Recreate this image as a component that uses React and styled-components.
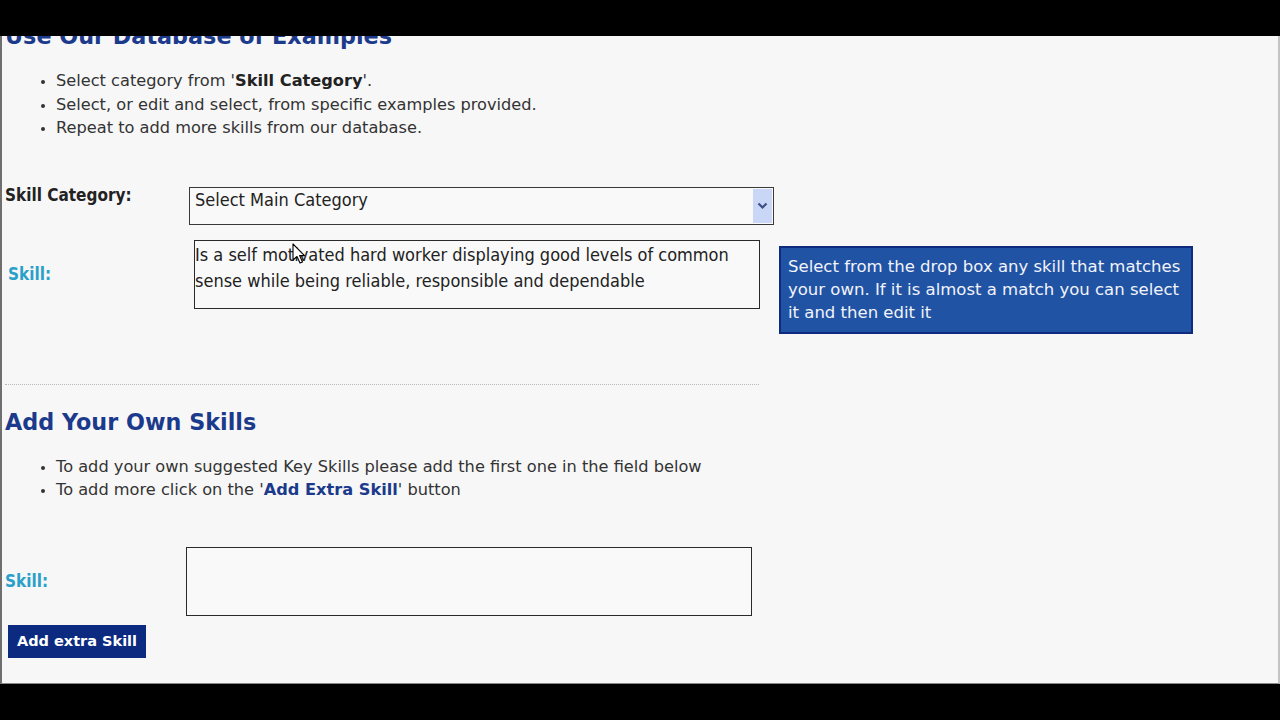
import React from 'react';
import styled, { createGlobalStyle } from 'styled-components';

const GlobalStyle = createGlobalStyle`
  html, body {
    margin: 0;
    padding: 0;
    background: #000;
  }
  body {
    font-family: "DejaVu Sans", Verdana, sans-serif;
  }
`;

const Page = styled.div`
  width: 1280px;
  height: 720px;
  background: #000;
  display: flex;
  flex-direction: column;
  overflow: hidden;
`;

const Bar = styled.div`
  height: ${(props) => props.$h}px;
  flex-shrink: 0;
  background: #000;
`;

const Screen = styled.div`
  position: relative;
  box-sizing: border-box;
  height: 648px;
  flex-shrink: 0;
  background: #f7f7f7;
  border-left: 2px solid #6f6f6f;
  border-right: 2px solid #c4c4c4;
  border-bottom: 1px solid #8a8a8a;
  overflow: hidden;
  padding-left: 3px;
`;

const Heading = styled.h2`
  margin: ${(props) => props.$mt || 0}px 0 0 0;
  font-family: "DejaVu Sans", Verdana, sans-serif;
  font-size: 22.3px;
  line-height: 26px;
  font-weight: bold;
  color: #1b3a8c;
`;

const BulletList = styled.ul`
  margin: ${(props) => props.$mt || 0}px 0 0 0;
  padding: 0 0 0 51px;
  font-size: 16.2px;
  line-height: 23.5px;
  color: #333;
  li::marker {
    font-size: 13px;
  }
`;

const Strong = styled.b`
  color: ${(props) => props.$color || '#222'};
`;

const FormRow = styled.div`
  display: flex;
  align-items: ${(props) => props.$align || 'flex-start'};
  margin-top: ${(props) => props.$mt || 0}px;
`;

const Label = styled.div`
  box-sizing: border-box;
  width: ${(props) => props.$w}px;
  padding-left: ${(props) => props.$pl || 0}px;
  padding-top: ${(props) => props.$pt || 0}px;
  font-family: "DejaVu Sans Condensed", Tahoma, sans-serif;
  font-weight: bold;
  font-size: 17px;
  line-height: 20px;
  color: ${(props) => props.$color || '#222'};
  flex-shrink: 0;
`;

const SelectBox = styled.div`
  box-sizing: border-box;
  width: 585px;
  height: 38px;
  margin-top: 2px;
  border: 1px solid #3a3a3a;
  background: #f9f9f9;
  display: flex;
  align-items: stretch;
`;

const SelectText = styled.div`
  flex: 1;
  padding: 1px 0 0 5px;
  font-family: "DejaVu Sans Condensed", Tahoma, sans-serif;
  font-size: 18px;
  line-height: 21px;
  color: #222;
`;

const SelectArrow = styled.div`
  width: 19px;
  margin: 1px;
  background: #c9d6f6;
  display: flex;
  align-items: center;
  justify-content: center;
`;

const TextBox = styled.div`
  box-sizing: border-box;
  width: ${(props) => props.$w}px;
  height: 69px;
  border: 1px solid #2a2a2a;
  background: #f9f9f9;
  padding: 1px 0 0 0;
  font-family: "DejaVu Sans Condensed", Tahoma, sans-serif;
  font-size: 18px;
  line-height: 26px;
  color: #222;
`;

const Tip = styled.div`
  box-sizing: border-box;
  width: 414px;
  height: 88px;
  margin: 6px 0 0 19px;
  background: #2153a5;
  border: 2px solid #0f2b7d;
  padding: 7px 6px 0 7px;
  color: #f2f4fa;
  font-size: 16.5px;
  line-height: 23px;
`;

const Divider = styled.div`
  width: 754px;
  margin: ${(props) => props.$mt}px 0 0 0;
  border-top: 1px dotted #b9b9b9;
`;

const Button = styled.button`
  box-sizing: border-box;
  margin: 9px 0 0 3px;
  width: 138px;
  height: 33px;
  border: none;
  background: #0b2a80;
  color: #fff;
  font-family: "DejaVu Sans", Verdana, sans-serif;
  font-weight: bold;
  font-size: 14.5px;
  padding: 0;
  display: block;
`;

const Cursor = styled.svg`
  position: absolute;
  left: 290px;
  top: 207px;
`;

const Chevron = () => (
  <svg width="11" height="8" viewBox="0 0 11 8">
    <path d="M1.5 1.5 L5.5 5.5 L9.5 1.5" fill="none" stroke="#3b4f86" strokeWidth="2.2" />
  </svg>
);

const App = () => {
  return (
    <Page>
      <GlobalStyle />
      <Bar $h={36} />
      <Screen>
        <Heading $mt={-13}>Use Our Database of Examples</Heading>
        <BulletList $mt={20}>
          <li>Select category from '<Strong>Skill Category</Strong>'.</li>
          <li>Select, or edit and select, from specific examples provided.</li>
          <li>Repeat to add more skills from our database.</li>
        </BulletList>

        <FormRow $mt={45}>
          <Label $w={184}>Skill Category:</Label>
          <SelectBox>
            <SelectText>Select Main Category</SelectText>
            <SelectArrow>
              <Chevron />
            </SelectArrow>
          </SelectBox>
        </FormRow>

        <FormRow $mt={15}>
          <Label $w={189} $pl={3} $pt={24} $color="#2aa0c9">Skill:</Label>
          <TextBox $w={566}>
            Is a self motivated hard worker displaying good levels of common sense while being reliable, responsible and dependable
          </TextBox>
          <Tip>
            Select from the drop box any skill that matches your own. If it is almost a match you can select it and then edit it
          </Tip>
        </FormRow>

        <Divider $mt={50} />
        <Heading $mt={24}>Add Your Own Skills</Heading>
        <BulletList $mt={20}>
          <li>To add your own suggested Key Skills please add the first one in the field below</li>
          <li>To add more click on the '<Strong $color="#1b3a8c">Add Extra Skill</Strong>' button</li>
        </BulletList>

        <FormRow $align="center" $mt={45}>
          <Label $w={181} $color="#2aa0c9">Skill:</Label>
          <TextBox $w={566} />
        </FormRow>
        <Button>Add extra Skill</Button>

        <Cursor width="14" height="22" viewBox="0 0 14 22">
          <path
            d="M1 1 L1 17 L5 13.5 L8 20 L10.5 19 L7.6 12.6 L12.5 12.6 Z"
            fill="#fff"
            stroke="#000"
            strokeWidth="1.1"
            strokeLinejoin="round"
          />
        </Cursor>
      </Screen>
      <Bar $h={36} />
    </Page>
  );
};

export default App;
